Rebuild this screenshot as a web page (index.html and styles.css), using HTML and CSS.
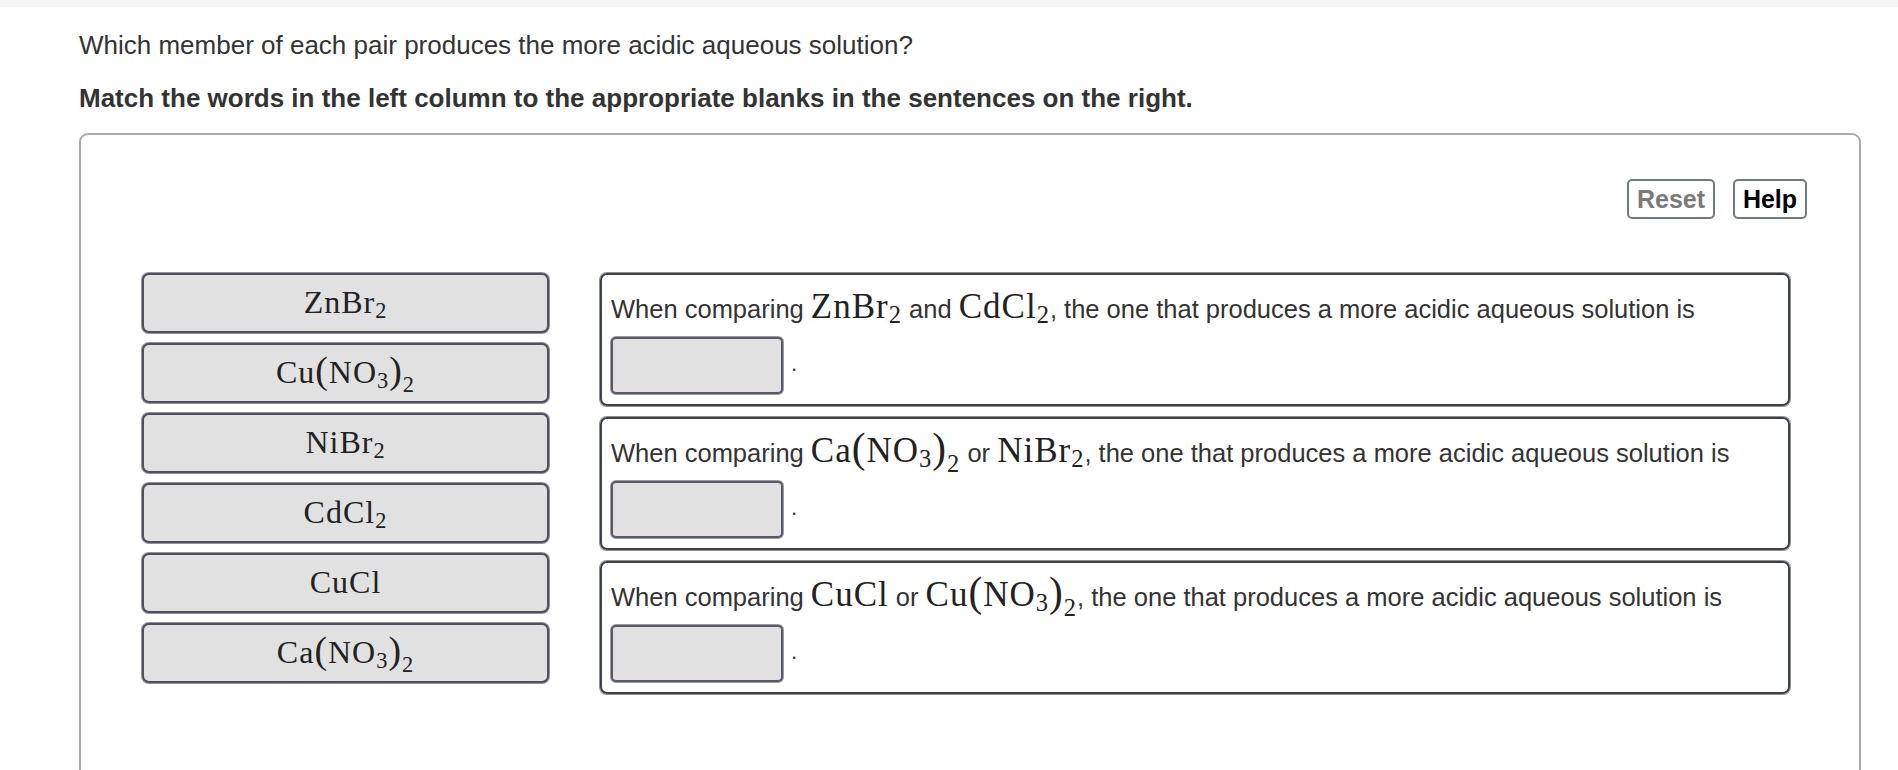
FILE: index.html
```html
<!DOCTYPE html>
<html lang="en">
<head>
    <meta charset="UTF-8">
    <title>Acidic solutions</title>
    <link rel="stylesheet" href="styles.css">
</head>
<body>
    <div class="page">
        <div class="topbar"></div>
        <div class="content">
            <p class="question">Which member of each pair produces the more acidic aqueous solution?</p>
            <p class="instr">Match the words in the left column to the appropriate blanks in the sentences on the right.</p>

            <div class="panel">
                <div class="tools">
                    <div class="tbtn reset">Reset</div>
                    <div class="tbtn help">Help</div>
                </div>

                <div class="match">
                    <div class="words">
                        <div class="word"><span class="chem">ZnBr<sub>2</sub></span></div>
                        <div class="word"><span class="chem">Cu<span class="par">(</span>NO<sub>3</sub><span class="par">)</span><sub class="out">2</sub></span></div>
                        <div class="word"><span class="chem">NiBr<sub>2</sub></span></div>
                        <div class="word"><span class="chem">CdCl<sub>2</sub></span></div>
                        <div class="word"><span class="chem">CuCl</span></div>
                        <div class="word"><span class="chem">Ca<span class="par">(</span>NO<sub>3</sub><span class="par">)</span><sub class="out">2</sub></span></div>
                    </div>

                    <div class="sentences">
                        <div class="sentence">
                            <p class="line">When comparing <span class="chem">ZnBr<sub>2</sub></span> and <span class="chem">CdCl<sub>2</sub></span>, the one that produces a more acidic aqueous solution is</p>
                            <div class="fill"><div class="blank"></div><span class="dot">.</span></div>
                        </div>
                        <div class="sentence">
                            <p class="line">When comparing <span class="chem">Ca<span class="par">(</span>NO<sub>3</sub><span class="par">)</span><sub class="out">2</sub></span> or <span class="chem">NiBr<sub>2</sub></span>, the one that produces a more acidic aqueous solution is</p>
                            <div class="fill"><div class="blank"></div><span class="dot">.</span></div>
                        </div>
                        <div class="sentence">
                            <p class="line">When comparing <span class="chem">CuCl</span> or <span class="chem">Cu<span class="par">(</span>NO<sub>3</sub><span class="par">)</span><sub class="out">2</sub></span>, the one that produces a more acidic aqueous solution is</p>
                            <div class="fill"><div class="blank"></div><span class="dot">.</span></div>
                        </div>
                    </div>
                </div>
            </div>
        </div>
    </div>
</body>
</html>
```
FILE: styles.css
```css
html, body{
    margin: 0;
    padding: 0;
    background: #fff;
}
.page{
    height: 770px;
    overflow: hidden;
    font-family: "Liberation Sans", Arial, sans-serif;
    color: #333;
}
.topbar{
    height: 7px;
    background-color: #f6f6f6;
}
.content{
    padding: 0 37px 0 79px;
}
.question{
    font-size: 26px;
    line-height: 28px;
    margin: 24px 0 0;
}
.instr{
    font-size: 26px;
    line-height: 28px;
    font-weight: bold;
    margin: 25px 0 0;
}
.panel{
    margin-top: 21px;
    border: 2px solid #ababab;
    border-radius: 9px;
    height: 700px;
    padding: 44px 52px 0 61px;
}
.tools{
    display: flex;
    justify-content: flex-end;
    gap: 18px;
}
.tbtn{
    height: 36px;
    line-height: 36px;
    border: 2px solid #6f7a80;
    border-radius: 5px;
    font-size: 25px;
    font-weight: bold;
    text-align: center;
}
.tbtn.reset{
    width: 84px;
    color: #7a7a7a;
}
.tbtn.help{
    width: 70px;
    color: #000;
}
.match{
    display: flex;
    gap: 51px;
    margin-top: 54px;
    padding-right: 17px;
}
.words{
    width: 407px;
    display: flex;
    flex-direction: column;
    gap: 10px;
    flex-shrink: 0;
}
.word{
    height: 56px;
    line-height: 54px;
    background-color: #e1e1e1;
    border: 2px solid #50505c;
    box-shadow: 0 0 0 1px #9494a0;
    border-radius: 7px;
    text-align: center;
    color: #222;
}
.chem{
    font-family: "Liberation Serif", "Times New Roman", serif;
    font-size: 32px;
    letter-spacing: 1px;
    color: #222;
}
.chem sub{
    font-size: 0.7em;
    line-height: 0;
    vertical-align: -0.22em;
}
.chem .par{
    font-size: 1.18em;
    line-height: 0;
}
.chem sub.out{
    vertical-align: -0.4em;
}
.sentences{
    flex: 1;
    display: flex;
    flex-direction: column;
    gap: 11px;
}
.sentence{
    height: 107px;
    padding: 14px 9px 8px;
    border: 2px solid #3b4145;
    box-shadow: 0 0 0 1px #8c9297;
    border-radius: 7px;
}
.line{
    margin: 0;
    font-size: 25.5px;
    line-height: 36px;
    color: #333;
}
.line .chem{
    font-size: 35px;
}
.fill{
    display: flex;
    align-items: center;
    margin-top: 10px;
}
.blank{
    width: 168px;
    height: 53px;
    background-color: #e1e1e1;
    border: 2px solid #585b67;
    box-shadow: 0 0 0 1px #9a9ca6;
    border-radius: 5px;
}
.dot{
    font-size: 22px;
    line-height: 22px;
    margin: -4px 0 0 8px;
}
```
